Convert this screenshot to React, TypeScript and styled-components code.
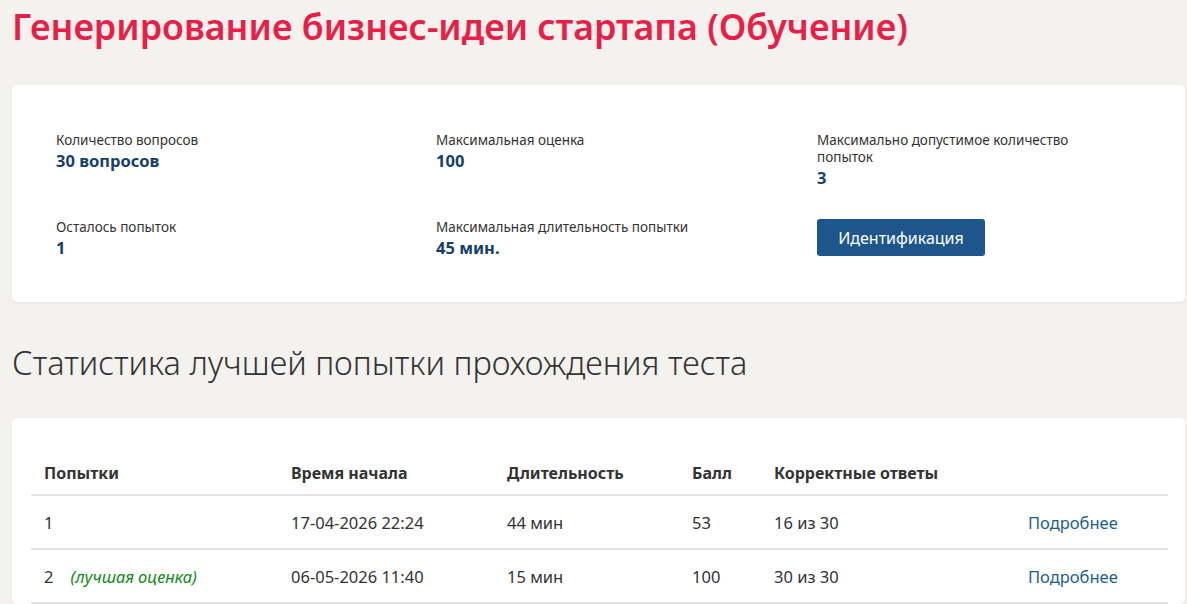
import React, { FunctionComponent } from 'react'
import styled, { createGlobalStyle } from 'styled-components'

const GlobalStyle = createGlobalStyle`
  html, body {
    margin: 0;
    padding: 0;
    background-color: #f3f2ef;
  }
  body {
    font-family: 'Noto Sans', 'Open Sans', sans-serif;
    color: #333333;
  }
`

const Page = styled.main`
  padding: 0 2px 0 12px;
`

const Title = styled.h1`
  margin: 0;
  padding-top: 4px;
  height: 85px;
  box-sizing: border-box;
  font-family: 'Noto Sans', sans-serif;
  font-weight: 600;
  font-size: 35.8px;
  line-height: 44px;
  color: #ea1e46;
`

const Card = styled.section`
  background-color: #ffffff;
  border-radius: 5px;
  box-shadow: 0 1px 2px rgba(0, 0, 0, 0.08);
`

const InfoCard = styled(Card)`
  height: 217px;
  box-sizing: border-box;
  padding: 47px 44px 0;
  display: grid;
  grid-template-columns: 380px 381px 280px;
  row-gap: 29px;
  align-content: start;
`

const InfoItem = styled.div`
  display: flex;
  flex-direction: column;
  align-items: flex-start;
`

const Label = styled.span`
  font-size: 13.5px;
  line-height: 17px;
  color: #333333;
`

const Value = styled.span`
  font-size: 16.5px;
  font-weight: 700;
  line-height: 24px;
  color: #173f6e;
`

const Button = styled.button`
  height: 37px;
  width: 168px;
  padding: 0;
  border: none;
  border-radius: 3px;
  background-color: #1c568b;
  color: #ffffff;
  font-family: inherit;
  font-size: 16px;
  cursor: pointer;
`

const SectionTitle = styled.h2`
  margin: 0;
  padding: 41px 0 0;
  height: 116px;
  box-sizing: border-box;
  font-family: 'Noto Sans', sans-serif;
  font-weight: 300;
  font-size: 32.5px;
  line-height: 40px;
  color: #333333;
`

const TableCard = styled(Card)`
  padding: 34px 17px 0 19px;
`

const Table = styled.table`
  width: 100%;
  border-collapse: collapse;
  font-size: 16.5px;
`

const HeadCell = styled.th<{ $width?: number }>`
  width: ${({ $width }) => ($width ? `${$width}px` : 'auto')};
  text-align: left;
  font-size: 16px;
  font-weight: 700;
  padding: 10px 13px;
  height: 43px;
  box-sizing: border-box;
  border-bottom: 2px solid #e4e3df;
  color: #333333;
`

const Cell = styled.td`
  padding: 0 13px;
  height: 52px;
  border-bottom: 2px solid #e4e3df;
  color: #333333;
`

const Best = styled.em`
  margin-left: 17px;
  color: #118a14;
`

const MoreLink = styled.a`
  color: #1c5e93;
  text-decoration: none;
`

interface Attempt {
  id: number
  start: string
  duration: string
  score: number
  correct: string
  best?: boolean
}

const attempts: Attempt[] = [
  { id: 1, start: '17-04-2026 22:24', duration: '44 мин', score: 53, correct: '16 из 30' },
  { id: 2, start: '06-05-2026 11:40', duration: '15 мин', score: 100, correct: '30 из 30', best: true },
]

const App: FunctionComponent = () => (
  <>
    <GlobalStyle />
    <Page>
      <Title>Генерирование бизнес-идеи стартапа (Обучение)</Title>
      <InfoCard>
        <InfoItem>
          <Label>Количество вопросов</Label>
          <Value>30 вопросов</Value>
        </InfoItem>
        <InfoItem>
          <Label>Максимальная оценка</Label>
          <Value>100</Value>
        </InfoItem>
        <InfoItem>
          <Label>Максимально допустимое количество попыток</Label>
          <Value>3</Value>
        </InfoItem>
        <InfoItem>
          <Label>Осталось попыток</Label>
          <Value>1</Value>
        </InfoItem>
        <InfoItem>
          <Label>Максимальная длительность попытки</Label>
          <Value>45 мин.</Value>
        </InfoItem>
        <InfoItem>
          <Button>Идентификация</Button>
        </InfoItem>
      </InfoCard>
      <SectionTitle>Статистика лучшей попытки прохождения теста</SectionTitle>
      <TableCard>
        <Table>
          <thead>
            <tr>
              <HeadCell $width={247}>Попытки</HeadCell>
              <HeadCell $width={216}>Время начала</HeadCell>
              <HeadCell $width={185}>Длительность</HeadCell>
              <HeadCell $width={82}>Балл</HeadCell>
              <HeadCell $width={254}>Корректные ответы</HeadCell>
              <HeadCell />
            </tr>
          </thead>
          <tbody>
            {attempts.map(a => (
              <tr key={a.id}>
                <Cell>
                  {a.id}
                  {a.best && <Best>(лучшая оценка)</Best>}
                </Cell>
                <Cell>{a.start}</Cell>
                <Cell>{a.duration}</Cell>
                <Cell>{a.score}</Cell>
                <Cell>{a.correct}</Cell>
                <Cell>
                  <MoreLink href="#">Подробнее</MoreLink>
                </Cell>
              </tr>
            ))}
          </tbody>
        </Table>
      </TableCard>
    </Page>
  </>
)

export default App
